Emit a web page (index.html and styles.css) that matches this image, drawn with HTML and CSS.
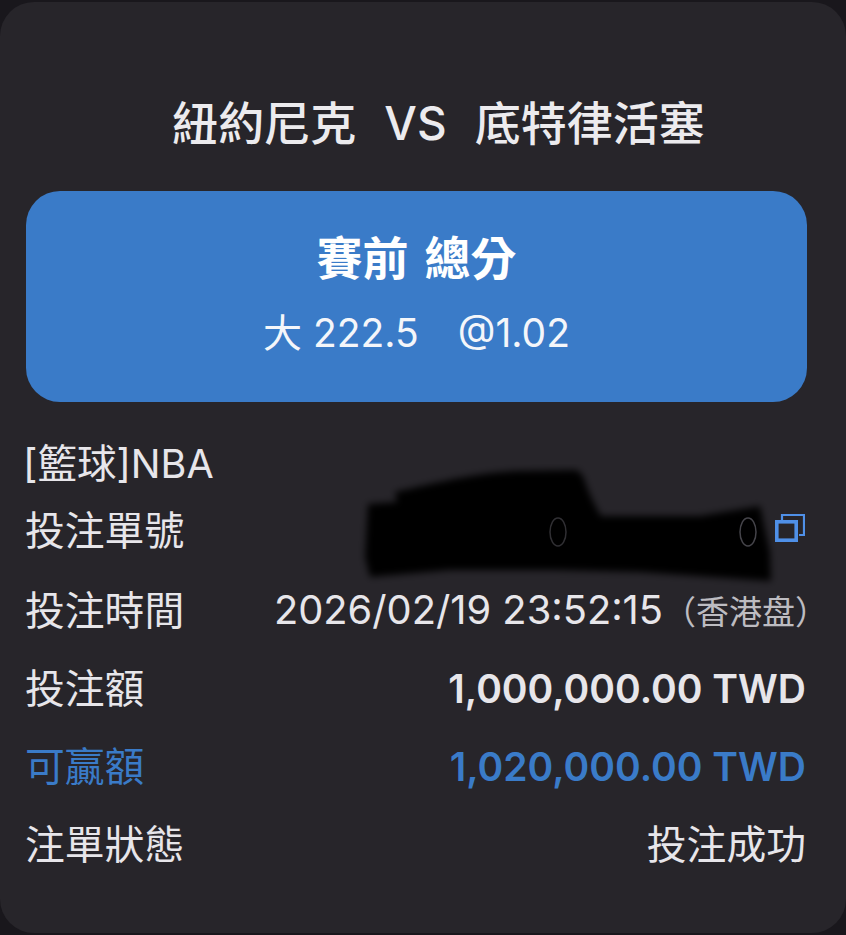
FILE: index.html
```html
<!DOCTYPE html>
<html lang="zh-Hant">
<head>
<meta charset="utf-8">
<title>投注單</title>
<link rel="stylesheet" href="styles.css">
</head>
<body>
<main class="sheet">
  <h1 class="match"><span>紐約尼克</span><span class="vs">VS</span><span>底特律活塞</span></h1>
  <section class="banner">
    <div class="banner-title">賽前<span class="gap"></span>總分</div>
    <div class="banner-pick"><span>大 222.5</span><span>@1.02</span></div>
  </section>
  <div class="league">[籃球]NBA</div>
  <div class="rows">
    <div class="row">
      <span>投注單號</span>
      <svg class="copy" viewBox="0 0 30 30" aria-hidden="true"><path d="M7 6V1h22v20h-5" fill="none" stroke="#4f90e8" stroke-width="2.2"/><rect x="1.8" y="7.8" width="19.4" height="18.4" fill="none" stroke="#4f90e8" stroke-width="3.6"/></svg>
    </div>
    <div class="row"><span>投注時間</span><span class="time">2026/02/19 23:52:15<span class="zone">（香港盘）</span></span></div>
    <div class="row"><span>投注額</span><span class="amount">1,000,000.00 TWD</span></div>
    <div class="row win"><span>可贏額</span><span class="amount">1,020,000.00 TWD</span></div>
    <div class="row"><span>注單狀態</span><span class="status">投注成功</span></div>
  </div>
  <svg class="redact" viewBox="0 0 430 124" aria-hidden="true">
    <defs><filter id="soft" x="-5%" y="-10%" width="110%" height="120%"><feGaussianBlur stdDeviation="3.5"/></filter></defs>
    <path filter="url(#soft)" fill="#050506" d="M42 38 L40 28 C70 22 110 10 160 7 L222 6 L228 12 C234 30 240 42 246 52 L345 52 L405 42 L415 88 L416 117 L285 108 L200 106 L95 106 L15 113 L10 93 L13 40 Z"/>
    <g fill="none" stroke-width="1.5"><ellipse cx="203" cy="68" rx="8" ry="14" stroke="#302f33"/><ellipse cx="393" cy="68" rx="8" ry="14" stroke="#45444a"/></g>
  </svg>
</main>
</body>
</html>
```
FILE: styles.css
```css
* { box-sizing: border-box; }
html, body { margin: 0; height: 100%; }
body {
  background: #19171c;
  font-family: Inter, "Noto Sans CJK TC", "Liberation Sans", sans-serif;
  color: #e7e6ea;
  overflow: hidden;
}
.sheet {
  position: relative;
  height: 931px;
  margin-top: 2px;
  padding: 0 39px 0 26px;
  background: #27252a;
  border-radius: 34px;
}
.match {
  display: flex;
  justify-content: center;
  gap: 28px;
  margin: 0;
  padding: 92px 0 0 44px;
  height: 189px;
  font-size: 46px;
  font-weight: 500;
  line-height: 58px;
  color: #ecebee;
}
.banner {
  width: 781px;
  height: 211px;
  padding-top: 38px;
  background: #3a7bc8;
  border-radius: 34px;
  text-align: center;
  color: #fff;
}
.banner-title { font-size: 46px; font-weight: 700; line-height: 58px; }
.gap { display: inline-block; width: 16px; }
.banner-pick {
  display: flex;
  justify-content: center;
  gap: 39px;
  margin-top: 22px;
  font-size: 39px;
  line-height: 48px;
  color: #f4f6fa;
}
.league {
  width: 781px;
  margin-top: 38px;
  margin-left: -3px;
  font-size: 39.5px;
  line-height: 48px;
}
.rows { width: 781px; }
.row {
  display: flex;
  justify-content: space-between;
  align-items: center;
  height: 78px;
  margin-left: -1px;
  font-size: 39.8px;
  line-height: 50px;
}
.row:first-child { height: 58px; margin-top: 14px; margin-bottom: 12px; }
.time { font-size: 39.8px; white-space: nowrap; }
.zone { margin-right: -21px; font-size: 33px; color: #bdbcc1; }
.amount { font-size: 39px; font-weight: 600; margin-right: 1px; }
.status { margin-right: 1px; }
.win { color: #3a7bc8; }
.copy { width: 30px; height: 30px; margin: 0 2px 4px 0; }
.redact {
  position: absolute;
  left: 355px;
  top: 462px;
  width: 430px;
  height: 124px;
}
```
